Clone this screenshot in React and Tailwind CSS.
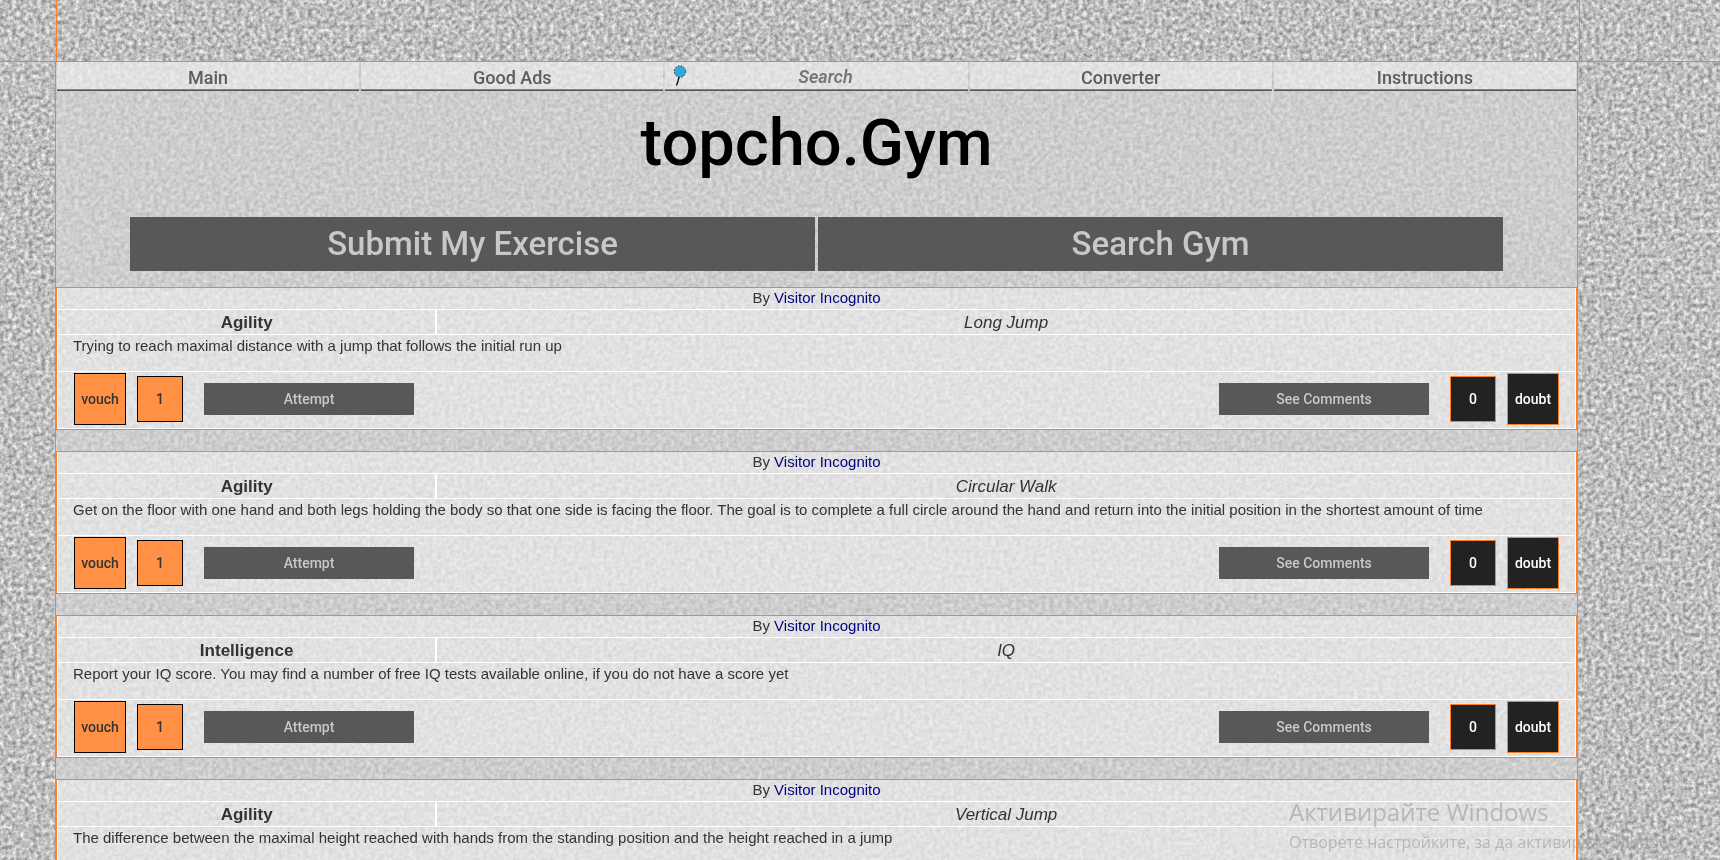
const navLinks = ['Main', 'Good Ads', null, 'Converter', 'Instructions'];

const exercises = [
  {
    id: 1,
    category: 'Agility',
    name: 'Long Jump',
    text: 'Trying to reach maximal distance with a jump that follows the initial run up',
    votes: { vouch: 1, doubt: 0 },
  },
  {
    id: 2,
    category: 'Agility',
    name: 'Circular Walk',
    text: 'Get on the floor with one hand and both legs holding the body so that one side is facing the floor. The goal is to complete a full circle around the hand and return into the initial position in the shortest amount of time',
    votes: { vouch: 1, doubt: 0 },
  },
  {
    id: 3,
    category: 'Intelligence',
    name: 'IQ',
    text: 'Report your IQ score. You may find a number of free IQ tests available online, if you do not have a score yet',
    votes: { vouch: 1, doubt: 0 },
  },
  {
    id: 4,
    category: 'Agility',
    name: 'Vertical Jump',
    text: 'The difference between the maximal height reached with hands from the standing position and the height reached in a jump',
  },
];

// grey stone grain behind the whole page
function Texture() {
  return (
    <svg className="fixed inset-0 -z-10 h-full w-full" aria-hidden="true">
      <filter id="grain" x="0" y="0" width="100%" height="100%" colorInterpolationFilters="sRGB">
        <feTurbulence type="fractalNoise" baseFrequency="0.24" numOctaves="3" seed="4" />
        <feColorMatrix values="0.65 0 0 0 0.42  0.65 0 0 0 0.42  0.65 0 0 0 0.42  0 0 0 0 1" />
      </filter>
      <rect width="100%" height="100%" filter="url(#grain)" />
    </svg>
  );
}

function PinIcon() {
  return (
    <svg className="h-[22px] w-3.5 shrink-0" viewBox="0 0 14 22" aria-hidden="true">
      <path d="M6 12 L5 16 L3.5 20.5" fill="none" stroke="#1a1a1a" strokeWidth="1.5" />
      <circle cx="7" cy="6.5" r="5.5" fill="#29abe2" />
      <circle cx="7" cy="6.5" r="5.7" fill="none" stroke="#1a1a1a" strokeDasharray="1.5 1.5" />
    </svg>
  );
}

function Nav() {
  const cell = 'h-[29px] border-b border-[#555555] bg-white/40 shadow-[inset_0_-1px_0_#858585]';
  return (
    <nav className="mx-px grid grid-cols-5 gap-0.5 text-lg font-medium text-[#5c5c5c]">
      {navLinks.map((label) =>
        label ? (
          <a key={label} href="#" className={`${cell} flex items-center justify-center pt-1`}>
            {label}
          </a>
        ) : (
          <div key="search" className={`${cell} flex items-center pl-2`}>
            <PinIcon />
            <input
              type="search"
              aria-label="Search"
              placeholder="Search"
              className="w-full min-w-0 bg-transparent pt-0.5 pl-3 text-center font-semibold italic outline-none placeholder:text-[#777777]"
            />
          </div>
        ),
      )}
    </nav>
  );
}

function Actions({ votes }) {
  const bar = 'h-8 w-[210px] bg-[#585858] text-[#c8c8c8]';
  return (
    <div className="flex h-[57px] items-center border-x border-b border-white px-4 pb-0.5 font-[Roboto,sans-serif] text-sm font-medium">
      <button className="size-[52px] border border-black bg-[#ff9044]">vouch</button>
      <span className="ml-[11px] flex size-[46px] items-center justify-center border border-black bg-[#ff9044]">
        {votes.vouch}
      </span>
      <button className={`${bar} ml-[21px]`}>Attempt</button>
      <button className={`${bar} ml-auto`}>See Comments</button>
      <span className="ml-[21px] flex size-[46px] items-center justify-center border border-[#fa8029] bg-[#222222] text-white">
        {votes.doubt}
      </span>
      <button className="ml-[11px] size-[52px] border border-[#fa8029] bg-[#222222] text-white">doubt</button>
    </div>
  );
}

function Exercise({ category, name, text, votes }) {
  return (
    <article className="border border-[#fa8029] bg-white/40 text-[#333333]">
      <p className="h-[22px] border-x border-b border-white text-center text-[15px] leading-5">
        By{' '}
        <a href="#" className="text-[#000080]">
          Visitor Incognito
        </a>
      </p>
      <div className="flex h-[25px] border-x border-b border-white text-[17px] leading-[26px]">
        <h2 className="w-1/4 border-r-2 border-white text-center font-bold">{category}</h2>
        <p className="flex-1 text-center italic">{name}</p>
      </div>
      <p className="h-[37px] border-x border-b border-white px-[15px] text-[15px] leading-[22px]">{text}</p>
      {votes && <Actions votes={votes} />}
    </article>
  );
}

export default function App() {
  return (
    <div className="relative isolate h-screen overflow-hidden font-['Liberation_Sans',Arial,sans-serif]">
      <Texture />
      <header className="h-[62px] border-b border-[#fa8029] pr-[140px] pl-14">
        <div className="h-full border-x border-[#fa8029]" />
      </header>

      <main className="mr-[142px] ml-[55px] border-x border-[#fa8029] bg-[#d6d6d6]/65">
        <div className="font-[Roboto,sans-serif] font-medium">
          <Nav />
          <h1 className="pt-2.5 text-center text-[65px] leading-[84px] text-black">topcho.Gym</h1>
          <div className="mx-[74px] mt-8 grid h-[54px] grid-cols-2 gap-[3px] text-[33px] text-[#c8c8c8]">
            <button className="bg-[#585858]">Submit My Exercise</button>
            <button className="bg-[#585858]">Search Gym</button>
          </div>
        </div>
        <div className="mt-4 flex flex-col gap-[21px]">
          {exercises.map((item) => (
            <Exercise key={item.id} {...item} />
          ))}
        </div>
      </main>

      <div className="pointer-events-none fixed right-0 bottom-0 w-[431px] overflow-hidden pb-1 font-['Open_Sans',sans-serif] whitespace-nowrap text-[#a0a0a0]/65">
        <p className="text-2xl leading-8">Активирайте Windows</p>
        <p className="text-base leading-7">Отворете настройките, за да активирате Windows.</p>
      </div>
    </div>
  );
}
